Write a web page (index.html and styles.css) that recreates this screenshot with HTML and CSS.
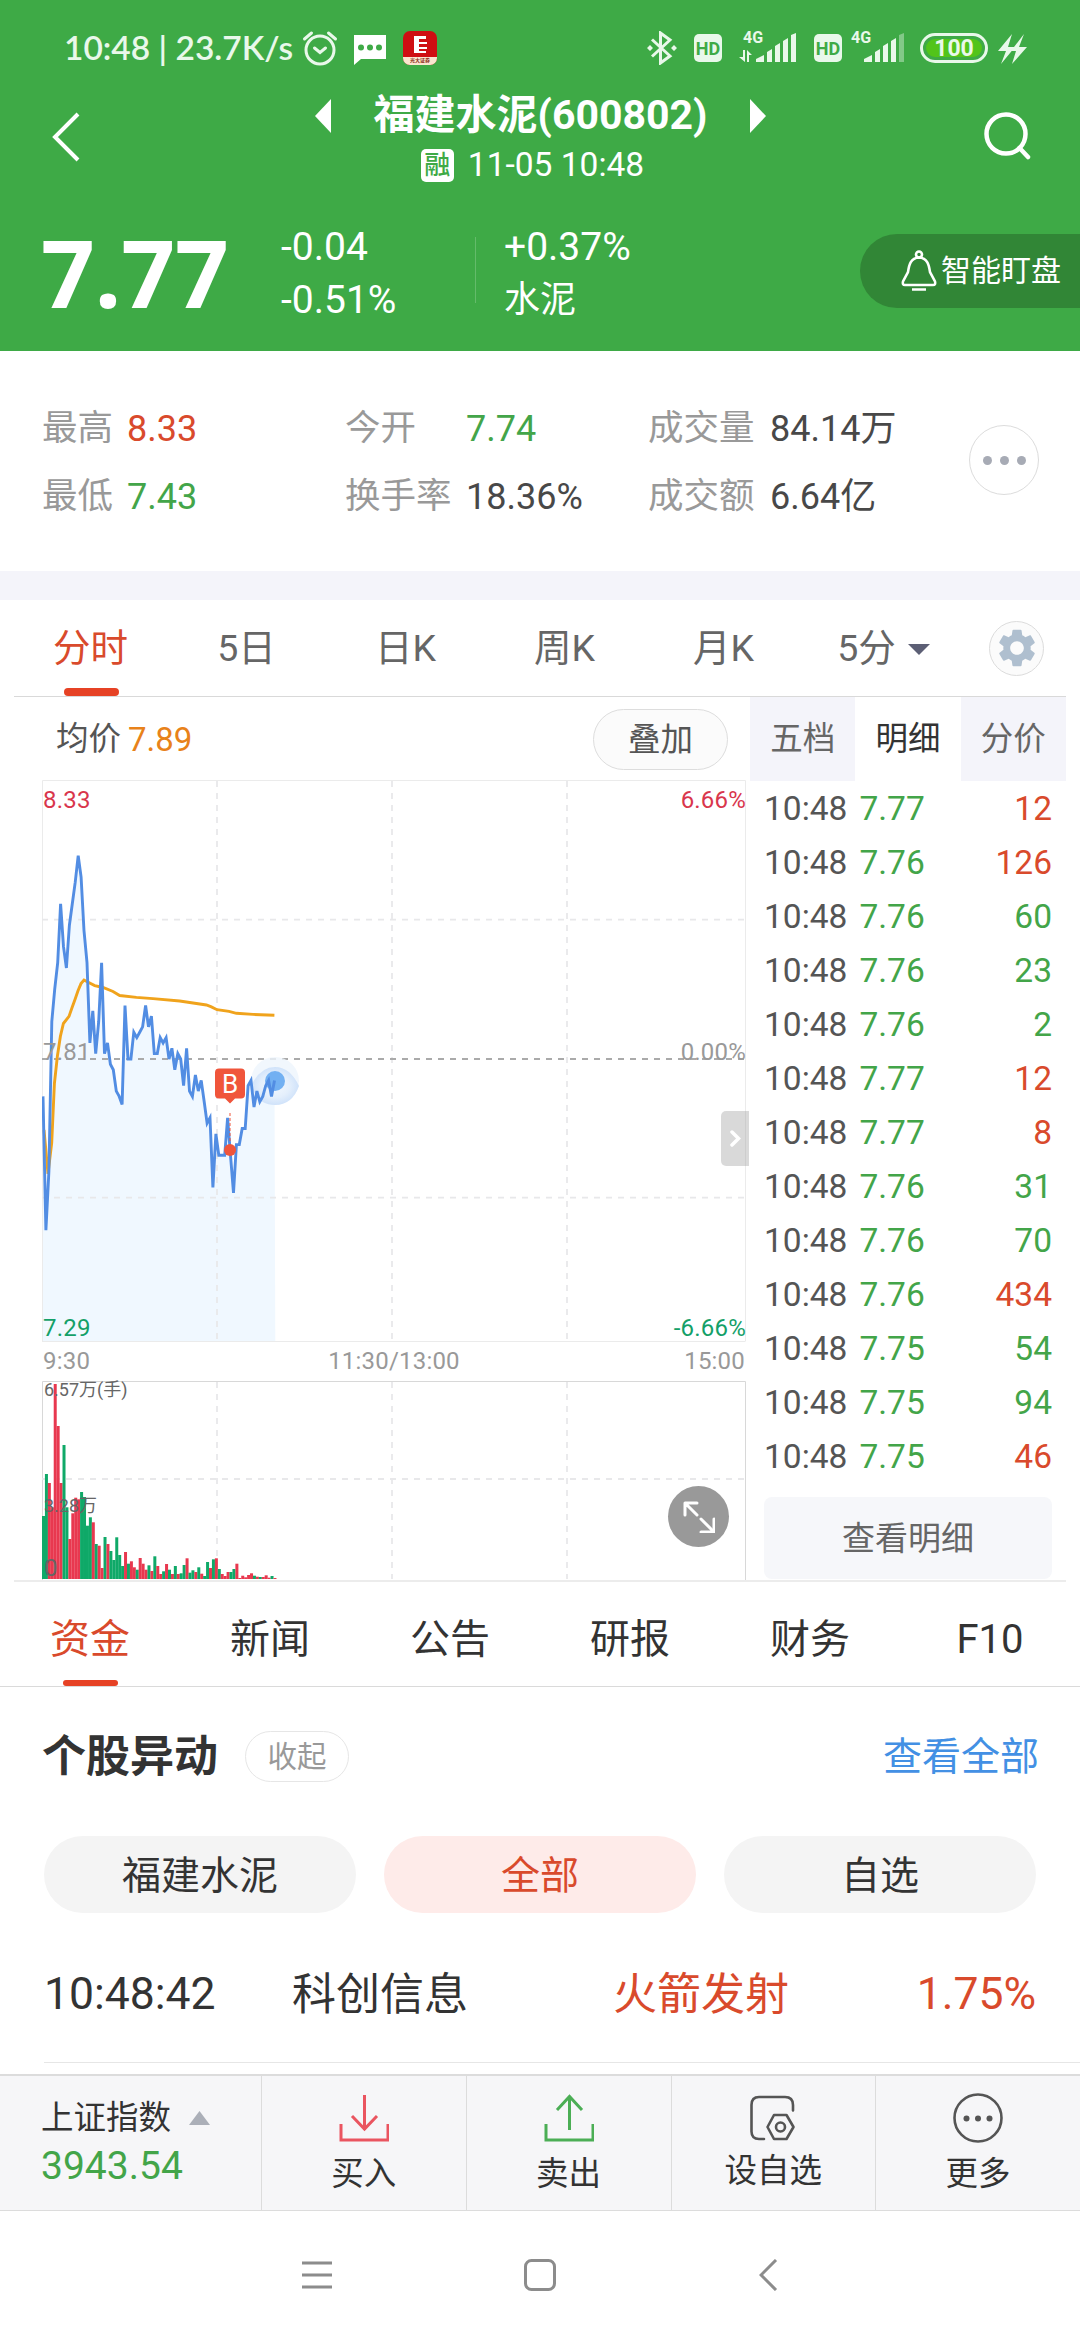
FILE: index.html
```html
<!DOCTYPE html>
<html lang="zh-CN">
<head>
    <meta charset="UTF-8">
    <meta name="viewport" content="width=device-width, initial-scale=1.0">
    <title>福建水泥(600802)</title>
    <link rel="stylesheet" href="styles.css">
</head>
<body>
    <header class="header">
        <div class="status-bar">
            <span class="status-time">10:48 | 23.7K/s</span>
            <svg class="icon-alarm" width="36" height="36" viewBox="0 0 36 36" fill="none" stroke="#e9f8ea" stroke-width="3" stroke-linecap="round">
                <circle cx="18" cy="20" r="14"/>
                <path d="M2.500 9L9.500 3M33.500 9L26.500 3M12.500 18L18 22.500L23.500 18"/>
            </svg>
            <svg class="icon-message" width="34" height="32" viewBox="0 0 34 32">
                <path d="M1 1h32v24H8l-7 6z" fill="#fff"/>
                <g fill="#3eaa46"><circle cx="8" cy="13.500" r="3"/><circle cx="17" cy="13.500" r="3"/><circle cx="26" cy="13.500" r="3"/></g>
            </svg>
            <div class="app-badge">
                <svg width="34" height="34" viewBox="0 0 34 34">
                    <rect width="34" height="34" rx="7" fill="#cf0f12"/>
                    <path d="M0 26h34v1a7 7 0 0 1-7 7H7a7 7 0 0 1-7-7z" fill="#fbe6cf"/>
                    <path d="M11 5h12v3h-7v3h8v2h-8v3h8v2h-8v2h7v2H11z" fill="#fff"/>
                </svg>
                <span class="app-name">光大证券</span>
            </div>

            <div class="status-right">
                <svg class="icon-bluetooth" width="30" height="34" viewBox="0 0 30 34" fill="none" stroke="#e9f8ea" stroke-width="3">
                    <path d="M5 8.500L23 25L13.500 32V2L23 9L5 25.500"/>
                    <path d="M0 17l3-3 3 3-3 3zM24 17l3-3 3 3-3 3z" fill="#e9f8ea" stroke="none"/>
                </svg>
                <span class="hd">HD</span>
                <div class="signal">
                    <span class="net">4G</span>
                    <svg width="58" height="32" viewBox="0 0 58 32" fill="#e9f8ea">
                        <path d="M17 30v-3l8-4v7zM28 30V20l5-3v13zM36 30V14l5-3v19zM44 30V9l5-3v24zM52 30V3l5-2v29z"/>
                        <path d="M4 18h2v12L0 25h4zM8 18l5 5H10v7H8z"/>
                    </svg>
                </div>
                <span class="hd">HD</span>
                <div class="signal signal-second">
                    <span class="net">4G</span>
                    <svg width="54" height="32" viewBox="0 0 54 32" fill="#e9f8ea">
                        <path d="M13 30v-3l8-4v7zM24 30V20l5-3v13zM32 30V14l5-3v19zM40 30V9l5-3v24z"/>
                        <path d="M48 30V3l5-2v29z" opacity=".4"/>
                    </svg>
                </div>
                <span class="battery"><span>100</span></span>
                <svg width="29" height="31" viewBox="0 0 29 31" fill="#e9f8ea">
                    <path d="M14 1L0 18h8L3 31L17 14H10zM26 1L13 18h5L14 31L29 14H21z"/>
                </svg>
            </div>
        </div>

        <div class="title-bar">
            <svg class="back" width="28" height="50" viewBox="0 0 28 50" fill="none" stroke="#fff" stroke-width="4">
                <path d="M26 2L3 25L26 48"/>
            </svg>
            <div class="title-center">
                <div class="title-row">
                    <svg width="16" height="34" viewBox="0 0 16 34" fill="#fff"><path d="M16 0v34L0 17z"/></svg>
                    <h1>福建水泥(600802)</h1>
                    <svg width="16" height="34" viewBox="0 0 16 34" fill="#fff"><path d="M0 0v34L16 17z"/></svg>
                </div>
                <div class="subtitle"><span class="margin-tag">融</span>11-05 10:48</div>
            </div>
            <svg class="search" width="48" height="48" viewBox="0 0 48 48" fill="none" stroke="#fff" stroke-width="4.500">
                <circle cx="22" cy="22" r="19.500"/>
                <path d="M35.500 36L44 45" stroke-linecap="round"/>
            </svg>
        </div>

        <div class="quote">
            <div class="price">7.77</div>
            <div class="quote-col change"><span>-0.04</span><span>-0.51%</span></div>
            <div class="quote-col sector"><span>+0.37%</span><span>水泥</span></div>
            <div class="watch-btn">
                <svg width="36" height="42" viewBox="0 0 36 42" fill="none" stroke="#fff" stroke-width="2.600">
                    <circle cx="18" cy="4.500" r="3"/>
                    <path d="M18 7.500C9 8 8 16 7 22L2 31.500Q1 35 4 35H32Q35 35 34 31.500L29 22C28 16 27 8 18 7.500ZM11 39.500H25"/>
                </svg>
                智能盯盘
            </div>
        </div>
    </header>

    <section class="stats">
        <div class="stats-grid">
            <span class="label">最高</span><span class="red">8.33</span>
            <span class="label">今开</span><span class="green">7.74</span>
            <span class="label">成交量</span><span>84.14万</span>
            <span class="label">最低</span><span class="green">7.43</span>
            <span class="label">换手率</span><span>18.36%</span>
            <span class="label">成交额</span><span>6.64亿</span>
        </div>
        <div class="more-btn"><i></i><i></i><i></i></div>
    </section>

    <nav class="period-tabs">
        <span class="active">分时</span>
        <span>5日</span>
        <span>日K</span>
        <span>周K</span>
        <span>月K</span>
        <span>5分<svg width="22" height="11" viewBox="0 0 22 11"><path d="M0 0h22L11 11z" fill="#5c5f75"/></svg></span>
        <div class="gear">
            <svg width="38" height="38" viewBox="2 2 20 20" fill="#afbfcf">
                <path d="M19.140 12.940c.04-.3.06-.61.06-.94 0-.32-.02-.64-.07-.94l2.030-1.580c.18-.14.23-.41.12-.61l-1.920-3.320c-.12-.22-.37-.29-.59-.22l-2.390.96c-.5-.38-1.030-.7-1.620-.94L14.400 2.810c-.04-.24-.24-.41-.48-.41h-3.840c-.24 0-.43.17-.47.41L9.250 5.350c-.59.24-1.130.57-1.620.94l-2.390-.96c-.22-.08-.47 0-.59.22L2.740 8.870c-.12.21-.08.47.12.61l2.030 1.580c-.05.3-.09.63-.09.94s.02.64.07.94l-2.030 1.580c-.18.14-.23.41-.12.61l1.920 3.320c.12.22.37.29.59.22l2.390-.96c.5.38 1.030.7 1.620.94l.36 2.540c.05.24.24.41.48.41h3.840c.24 0 .44-.17.47-.41l.36-2.540c.59-.24 1.130-.56 1.620-.94l2.390.96c.22.08.47 0 .59-.22l1.920-3.320c.12-.22.07-.47-.12-.61l-2.010-1.580zM12 15.600c-1.980 0-3.600-1.620-3.600-3.600s1.620-3.600 3.600-3.600 3.600 1.620 3.600 3.600-1.620 3.600-3.600 3.600z"/>
            </svg>
        </div>
    </nav>

    <main class="market">
        <div class="chart-panel">
            <div class="chart-head">
                <span>均价</span><span class="avg">7.89</span>
                <span class="overlay-btn">叠加</span>
            </div>
            <svg class="chart" width="708" height="800" viewBox="0 0 708 800">
                <g fill="none" stroke="#ebebeb" stroke-width="1">
                    <path d="M.5 561V.5H703.500V561M0 561.500H703.500"/>
                    <path d="M.5 800V601.500H703.500V800" stroke="#d8d8d8"/>
                </g>
                <path id="area" fill="#f0f8ff"/>
                <g fill="none" stroke="#e8e8ea" stroke-width="1.800">
                    <path stroke-dasharray="6 6" d="M0 139.700H703M0 417.700H703M0 699H703"/>
                    <path stroke-dasharray="6 6" d="M175 1V561M350 1V561M525 1V561M175 602V799M350 602V799M525 602V799"/>
                    <path stroke="#aaa" stroke-dasharray="6 6" d="M0 279H703"/>
                </g>
                <polyline fill="none" stroke="#f0a31c" stroke-width="2.900" points="2,350 6,393.800 9.700,363 12.400,303.600 15.400,276 18.400,256.200 21.400,243.500 27,236.400 30,227.700 33,219.400 36,210.700 39,203.600 42,200 45.700,202 52.700,205.600 61,207.500 71,211.500 77.700,215.500 94.400,217.400 111,218.600 137.700,221 164.400,225 169.400,226.900 175,229.700 187,231.300 194.400,233.300 211,234.400 232.400,235.200"/>
                <defs>
                    <radialGradient id="halo">
                        <stop offset="0" stop-color="#f3f8fe"/>
                        <stop offset=".6" stop-color="#e4effc"/>
                        <stop offset="1" stop-color="#cfe2fa"/>
                    </radialGradient>
                </defs>
                <circle cx="233" cy="301" r="24" fill="#eef5fd" opacity=".8"/>
                <path d="M209 306Q218 287 233 287T257 306Q250 325 233 325T209 306Z" fill="url(#halo)"/>
                <circle cx="233" cy="301" r="10" fill="#72b0f2"/>
                <polyline id="price" fill="none" stroke="#528de3" stroke-width="2.900"/>
                <path d="M188 333V361" stroke="#ef553b" stroke-width="1" stroke-dasharray="3 2"/>
                <circle cx="188" cy="370" r="6" fill="#f0553b"/>
                <path d="M177 288.500h22a4 4 0 0 1 4 4v22a4 4 0 0 1-4 4h-6l-5 5-5-5h-6a4 4 0 0 1-4-4v-22a4 4 0 0 1 4-4z" fill="#f0553b"/>
                <text x="188" y="313" class="mark" text-anchor="middle">B</text>
                <g id="volume"></g>
                <g class="axis">
                    <text x="1" y="28" class="up">8.33</text>
                    <text x="704" y="28" class="up" text-anchor="end">6.66%</text>
                    <text x="1" y="280">7.81</text>
                    <text x="704" y="280" text-anchor="end">0.00%</text>
                    <text x="1" y="556" class="down">7.29</text>
                    <text x="704" y="556" class="down" text-anchor="end">-6.66%</text>
                    <text x="1" y="588.500">9:30</text>
                    <text x="352" y="588.500" text-anchor="middle">11:30/13:00</text>
                    <text x="703" y="588.500" text-anchor="end">15:00</text>
                </g>
                <g class="vol-axis">
                    <text x="2" y="616">6.57万(手)</text>
                    <text x="2" y="732">3.28万</text>
                    <text x="2" y="796" class="zero">0</text>
                </g>
            </svg>
            <div class="handle">
                <svg width="12" height="17" viewBox="0 0 12 17" fill="none" stroke="#fff" stroke-width="3.500" stroke-linecap="round"><path d="M3 2L9.500 8.500L3 15"/></svg>
            </div>
            <div class="expand">
                <svg width="32" height="32" viewBox="0 0 32 32" fill="none" stroke="#fff" stroke-width="3" stroke-linecap="round" stroke-linejoin="round">
                    <path d="M14 2H2V14M2.500 2.500L14 14M18 18L30 30M31 18V31H18"/>
                </svg>
            </div>
        </div>

        <aside class="ticks">
            <div class="tick-tabs"><span>五档</span><span class="active">明细</span><span>分价</span></div>
            <div id="tick-list"></div>
            <div class="detail-btn">查看明细</div>
        </aside>
    </main>

    <nav class="info-tabs">
        <span class="active">资金</span><span>新闻</span><span>公告</span><span>研报</span><span>财务</span><span>F10</span>
    </nav>

    <section class="moves">
        <div class="moves-head">
            <h2>个股异动</h2>
            <span class="fold">收起</span>
            <span class="view-all">查看全部</span>
        </div>
        <div class="filters"><span>福建水泥</span><span class="active">全部</span><span>自选</span></div>
        <div class="move-row">
            <span>10:48:42</span><span>科创信息</span><span class="red">火箭发射</span><span class="red">1.75%</span>
        </div>
    </section>

    <footer class="toolbar">
        <div class="index">
            <div class="index-name">上证指数<svg width="21" height="14" viewBox="0 0 21 14"><path d="M10.500 0L21 14H0z" fill="#abafb8"/></svg></div>
            <div class="index-value">3943.54</div>
        </div>
        <div class="tool">
            <svg width="50" height="50" viewBox="0 0 50 50" fill="none" stroke="#ea5560" stroke-width="3"><path d="M25.500 2V37M13 23L25.500 36L38 23M2 31V47H49V31"/></svg>
            买入
        </div>
        <div class="tool">
            <svg width="50" height="50" viewBox="0 0 50 50" fill="none" stroke="#4bae55" stroke-width="3"><path d="M25.500 37V3M13 17L25.500 3.500L38 17M2 31V47H49V31"/></svg>
            卖出
        </div>
        <div class="tool tool-set">
            <svg width="50" height="50" viewBox="0 0 50 50" fill="none" stroke="#555" stroke-width="2.600" stroke-linecap="round" stroke-linejoin="round">
                <path d="M16 46H11Q3.500 46 3.500 38.500V12Q3.500 4 11 4H37Q45 4 45 12V17.500"/>
                <path d="M26 22H38.500L45.500 34L38.500 46H26L19.500 34Z"/><circle cx="32.500" cy="34" r="4.500"/>
            </svg>
            设自选
        </div>
        <div class="tool">
            <svg width="50" height="50" viewBox="0 0 50 50" fill="none" stroke="#555" stroke-width="2.600">
                <circle cx="25" cy="25" r="23.500"/>
                <g fill="#555" stroke="none"><circle cx="13.500" cy="25.500" r="3"/><circle cx="25" cy="25.500" r="3"/><circle cx="36.500" cy="25.500" r="3"/></g>
            </svg>
            更多
        </div>
    </footer>

    <div class="system-nav">
        <svg width="30" height="32" viewBox="0 0 30 32" stroke="#8c8c8c" stroke-width="3"><path d="M0 4H30M0 16H30M0 28H30"/></svg>
        <svg width="32" height="32" viewBox="0 0 32 32" fill="none" stroke="#8c8c8c" stroke-width="3"><rect x="1.500" y="1.500" width="29" height="29" rx="6"/></svg>
        <svg width="19" height="32" viewBox="0 0 19 32" fill="none" stroke="#8c8c8c" stroke-width="3"><path d="M17 1L2 16L17 31"/></svg>
    </div>

    <script>
        // one value per minute from 9:30
        const prices = [7.74, 7.49, 7.60, 7.88, 7.94, 7.99, 8.10, 8.02, 7.98, 8.06, 8.10, 8.14, 8.19, 8.15, 8.05, 7.99,
            7.84, 7.90, 7.82, 7.88, 7.99, 7.82, 7.84, 7.80, 7.79, 7.75, 7.74, 7.725, 7.91, 7.81, 7.81, 7.86,
            7.85, 7.86, 7.87, 7.91, 7.87, 7.89, 7.82, 7.82, 7.85, 7.84, 7.85, 7.81, 7.83, 7.79, 7.82, 7.81,
            7.76, 7.83, 7.75, 7.74, 7.78, 7.75, 7.77, 7.73, 7.69, 7.70, 7.57, 7.67, 7.63, 7.63, 7.63, 7.70,
            7.63, 7.56, 7.65, 7.65, 7.68, 7.68, 7.76, 7.77, 7.72, 7.75, 7.73, 7.74, 7.76, 7.77, 7.74, 7.77];
        const volumes = 'g189 g315 r288 r215 r585 r459 r288 g402 g215 r120 r197 r244 r239 g261 g246 g160 g185 r170 g105 r100 r33 g126 r105 g84 g57 g125 g72 g39 r81 g46 r53 r35 g28 r63 r46 r28 g41 r24 g68 r39 r15 g23 r45 g28 r15 g39 r15 g17 g42 r62 g19 g26 r21 g35 r16 g9 g51 r33 g59 r62 g30 r15 r9 r21 g21 g30 r46 r3 r10 r5 r12 r17 g10 r7 g6 r6 r11 r4 g9 r3'.split(' ');
        const ticks = [['7.77', 12, 'red'], ['7.76', 126, 'red'], ['7.76', 60, 'green'], ['7.76', 23, 'green'], ['7.76', 2, 'green'],
            ['7.77', 12, 'red'], ['7.77', 8, 'red'], ['7.76', 31, 'green'], ['7.76', 70, 'green'], ['7.76', 434, 'red'],
            ['7.75', 54, 'green'], ['7.75', 94, 'green'], ['7.75', 46, 'red']];

        const step = 2.93;
        const points = prices.map((p, i) => `${(1 + i * step).toFixed(1)},${(279 - (p - 7.81) * 535).toFixed(1)}`);
        document.getElementById('price').setAttribute('points', points.join(' '));
        document.getElementById('area').setAttribute('d', `M1,561 L${points.join(' ')} L233.300,561 Z`);

        document.getElementById('volume').innerHTML = volumes.map((v, i) => {
            const h = v.slice(1) / 3;
            const color = v[0] === 'r' ? '#e8384f' : '#0fa968';
            return `<rect x="${(i * step).toFixed(2)}" y="${(799 - h).toFixed(1)}" width="3" height="${h.toFixed(1)}" fill="${color}"/>`;
        }).join('');

        document.getElementById('tick-list').innerHTML = ticks.map(t =>
            `<div class="tick"><span>10:48</span><span class="green">${t[0]}</span><span class="${t[2]}">${t[1]}</span></div>`
        ).join('');
    </script>
</body>
</html>
```
FILE: styles.css
```css
* {
    box-sizing: border-box;
}
body {
    margin: 0;
    width: 1080px;
    height: 2340px;
    overflow: hidden;
    background-color: #fff;
    font-family: Roboto, "Noto Sans CJK SC", sans-serif;
    color: #333;
    line-height: 1;
}
svg {
    display: block;
    flex: none;
}
h1, h2 {
    margin: 0;
}
.red {
    color: #d94a2c;
}
.green {
    color: #43a549;
}

/* header */
.header {
    height: 351px;
    background-color: #3eaa46;
    color: #fff;
}
.status-bar {
    display: flex;
    align-items: center;
    height: 94px;
    padding: 2px 53px 0 64px;
    color: #e9f8ea;
}
.status-time {
    width: 238px;
    font-family: Lato, sans-serif;
    font-size: 33.500px;
    font-weight: 600;
    white-space: nowrap;
}
.icon-message {
    margin: 4px 16px 0 15px;
}
.app-badge {
    position: relative;
}
.app-name {
    position: absolute;
    left: 7px;
    top: 27px;
    font-size: 5px;
    font-weight: bold;
    color: #8a2a12;
    white-space: nowrap;
}
.status-right {
    display: flex;
    align-items: center;
    margin-left: auto;
}
.hd {
    width: 28px;
    height: 28px;
    margin-left: 17px;
    border-radius: 5px;
    background-color: #e9f8ea;
    color: #3eaa46;
    font-size: 18px;
    font-weight: bold;
    line-height: 29px;
    text-align: center;
}
.signal {
    position: relative;
    margin-left: 17px;
}
.signal-second {
    margin-left: 9px;
}
.net {
    position: absolute;
    left: 4px;
    top: -2px;
    font-size: 16px;
    font-weight: bold;
}
.signal-second .net {
    left: 0;
}
.battery {
    width: 68px;
    height: 30px;
    margin: 0 10px 0 15px;
    padding: 3px;
    border: 3px solid #e9f8ea;
    border-radius: 15px;
}
.battery span {
    display: block;
    height: 18px;
    border-radius: 9px;
    background-color: #52c41a;
    font-size: 23px;
    font-weight: bold;
    line-height: 19px;
    text-align: center;
}
.title-bar {
    display: flex;
    justify-content: space-between;
    height: 110px;
    padding: 0 48px 0 52px;
}
.back {
    margin-top: 18px;
}
.title-center {
    margin-left: 17px;
}
.title-row {
    display: flex;
    align-items: center;
    justify-content: center;
    gap: 43px;
    height: 43px;
}
.title-row h1 {
    font-size: 41px;
    font-weight: 700;
    line-height: 43px;
}
.subtitle {
    display: flex;
    align-items: center;
    justify-content: center;
    height: 56px;
    margin-right: 16px;
    font-size: 33.500px;
}
.margin-tag {
    width: 33px;
    height: 33px;
    margin-right: 14px;
    border-radius: 5px;
    background-color: #fff;
    color: #3eaa46;
    font-size: 26px;
    font-weight: 500;
    line-height: 32px;
    text-align: center;
}
.search {
    margin-top: 18px;
}
.quote {
    display: flex;
    height: 147px;
    padding: 30px 0 0 41px;
}
.price {
    width: 240px;
    margin-top: -3px;
    font-family: "Noto Sans", sans-serif;
    font-size: 94px;
    font-weight: bold;
    line-height: 82px;
}
.quote-col {
    display: flex;
    flex-direction: column;
    font-size: 39px;
    line-height: 53px;
    margin-top: -13px;
}
.change {
    width: 195px;
}
.sector {
    position: relative;
    width: 384px;
    padding-left: 28px;
}
.sector::before {
    content: "";
    position: absolute;
    left: -1px;
    top: 16px;
    width: 1px;
    height: 66px;
    background-color: #64bb6a;
}
.sector span + span {
    font-size: 36px;
}
.watch-btn {
    display: flex;
    align-items: center;
    gap: 4px;
    width: 220px;
    height: 74px;
    padding-left: 41px;
    border-radius: 37px 0 0 37px;
    background-color: #318636;
    font-size: 30px;
    white-space: nowrap;
}

/* day stats */
.stats {
    display: flex;
    justify-content: space-between;
    height: 249px;
    padding: 44px 41px 0 42px;
    border-bottom: 29px solid #f4f4fa;
}
.stats-grid {
    display: grid;
    grid-template-columns: 85px 218px 121px 182px 122px 140px;
    grid-auto-rows: 68px;
    align-items: center;
    font-size: 36px;
    color: #484848;
    white-space: nowrap;
}
.stats-grid .label {
    color: #999;
    font-size: 35.500px;
}
.stats-grid .red {
    color: #d94a2c;
}
.stats-grid .green {
    color: #43a549;
}
.more-btn {
    display: flex;
    align-items: center;
    justify-content: center;
    gap: 8px;
    width: 70px;
    height: 70px;
    margin-top: 30px;
    border: 1px solid #dcdcdc;
    border-radius: 50%;
}
.more-btn i {
    width: 9px;
    height: 9px;
    border-radius: 50%;
    background-color: #a7abb5;
}

/* period tabs */
.period-tabs {
    display: flex;
    align-items: center;
    height: 97px;
    margin: 0 14px;
    border-bottom: 1px solid #d9d9d9;
    font-size: 37.500px;
    color: #666;
}
.period-tabs span {
    position: relative;
    display: flex;
    align-items: center;
    justify-content: center;
    width: 159px;
    height: 96px;
    padding-top: 2px;
}
.period-tabs span:nth-child(1) {
    width: 153px;
}
.period-tabs span:nth-child(6) {
    width: 161px;
    gap: 12px;
}
.period-tabs .active,
.info-tabs .active {
    color: #d94a2c;
}
.period-tabs .active::after,
.info-tabs .active::after {
    content: "";
    position: absolute;
    left: calc(50% - 27px);
    bottom: 0;
    width: 55px;
    height: 8px;
    border-radius: 4px;
    background-color: #e64225;
}
.gear {
    display: flex;
    align-items: center;
    justify-content: center;
    width: 55px;
    height: 55px;
    margin-left: 25px;
    border: 1px solid #dcdcdc;
    border-radius: 50%;
    background-color: #fbfbfb;
}

/* chart + ticks */
.market {
    display: flex;
    height: 885px;
    margin: 0 14px;
    border-bottom: 2px solid #ececec;
}
.chart-panel {
    position: relative;
    width: 736px;
    padding-left: 28px;
}
.chart-head {
    display: flex;
    align-items: center;
    height: 83px;
    padding: 1px 22px 0 14px;
    font-size: 32.500px;
    color: #555;
}
.chart-head .avg {
    margin-left: 7px;
    font-size: 33px;
    color: #e8821a;
}
.overlay-btn {
    width: 135px;
    height: 61px;
    margin-left: auto;
    border: 1px solid #ddd;
    border-radius: 31px;
    background-color: #fbfbfb;
    line-height: 60px;
    text-align: center;
}
.axis text {
    font-size: 24px;
    letter-spacing: .2px;
    fill: #999;
}
.axis .up {
    fill: #d9364c;
}
.axis .down {
    fill: #14a068;
}
.vol-axis text {
    font-size: 18px;
    fill: #666;
}
.vol-axis .zero {
    font-size: 24px;
}
.mark {
    font-size: 26px;
    fill: #fff;
}
.handle {
    position: absolute;
    right: 1px;
    top: 414px;
    display: flex;
    align-items: center;
    justify-content: center;
    width: 28px;
    height: 55px;
    border-radius: 5px 0 0 5px;
    background-color: rgba(160, 160, 160, .4);
}
.expand {
    position: absolute;
    right: 21px;
    top: 789px;
    display: flex;
    align-items: center;
    justify-content: center;
    width: 61px;
    height: 61px;
    border-radius: 50%;
    background-color: #999;
}
.ticks {
    width: 316px;
}
.tick-tabs {
    display: flex;
    height: 84px;
    background-color: #f4f4fa;
    font-size: 32.500px;
    line-height: 85px;
    color: #666;
}
.tick-tabs span {
    flex: 1;
    text-align: center;
}
.tick-tabs .active {
    background-color: #fff;
    color: #333;
}
.tick {
    display: flex;
    height: 54px;
    padding: 0 14px 0 14px;
    font-size: 33.500px;
    line-height: 55px;
    color: #555;
}
.tick span:nth-child(2) {
    margin-left: 12px;
}
.tick span:last-child {
    margin-left: auto;
}
.detail-btn {
    height: 82px;
    margin: 14px 14px 0;
    border-radius: 8px;
    background-color: #f6f7fa;
    font-size: 33px;
    line-height: 84px;
    text-align: center;
    color: #666;
}

/* info tabs */
.info-tabs {
    display: flex;
    height: 105px;
    border-bottom: 1px solid #dadada;
    font-size: 40px;
    line-height: 116px;
    text-align: center;
}
.info-tabs span {
    position: relative;
    flex: 1;
}
.info-tabs .active::after {
    height: 6px;
    border-radius: 3px;
}

/* stock moves */
.moves {
    height: 387px;
    padding: 43px 44px 0;
}
.moves-head {
    display: flex;
    align-items: center;
    height: 52px;
    margin-left: -2px;
}
.moves-head h2 {
    padding-top: 2px;
    font-size: 44px;
    font-weight: 700;
}
.fold {
    width: 104px;
    height: 51px;
    margin-left: 27px;
    border: 1px solid #e6e6e6;
    border-radius: 26px;
    font-size: 29.500px;
    line-height: 50px;
    text-align: center;
    color: #999;
}
.view-all {
    margin-left: auto;
    margin-right: -3px;
    padding-top: 2px;
    font-size: 39px;
    color: #4390e4;
}
.filters {
    display: flex;
    gap: 28px;
    margin-top: 54px;
}
.filters span {
    flex: 1;
    height: 77px;
    border-radius: 39px;
    background-color: #f4f4f4;
    font-size: 39px;
    line-height: 80px;
    text-align: center;
}
.filters .active {
    background-color: #feebe9;
    color: #d94a2c;
}
.move-row {
    display: grid;
    grid-template-columns: 248px 321px 1fr auto;
    align-items: center;
    height: 150px;
    margin: 0 -44px 0 0;
    padding: 14px 44px 0 0;
    border-bottom: 1px solid #e6e6e6;
    font-size: 44px;
}
.move-row span:first-child,
.move-row span:last-child {
    font-size: 44.500px;
}

/* bottom toolbar */
.toolbar {
    display: grid;
    grid-template-columns: 261px repeat(4, 1fr);
    height: 137px;
    border-top: 2px solid #dcdcdc;
    border-bottom: 1px solid #dcdcdc;
    background-color: #f6f6f8;
}
.index {
    padding: 23px 0 0 41px;
}
.index-name {
    display: flex;
    align-items: center;
    gap: 18px;
    height: 38px;
    font-size: 32.500px;
}
.index-value {
    margin-top: 10px;
    font-size: 39px;
    color: #43a549;
}
.tool {
    display: flex;
    flex-direction: column;
    align-items: center;
    gap: 15px;
    padding-top: 17px;
    border-left: 1px solid #dcdcdc;
    font-size: 32.500px;
}
.tool-set {
    gap: 12px;
}
.system-nav {
    display: flex;
    padding: 48px 0 0 302px;
}
.system-nav svg + svg {
    margin-left: 192px;
}
.system-nav svg:last-child {
    margin-left: 203px;
}
```
